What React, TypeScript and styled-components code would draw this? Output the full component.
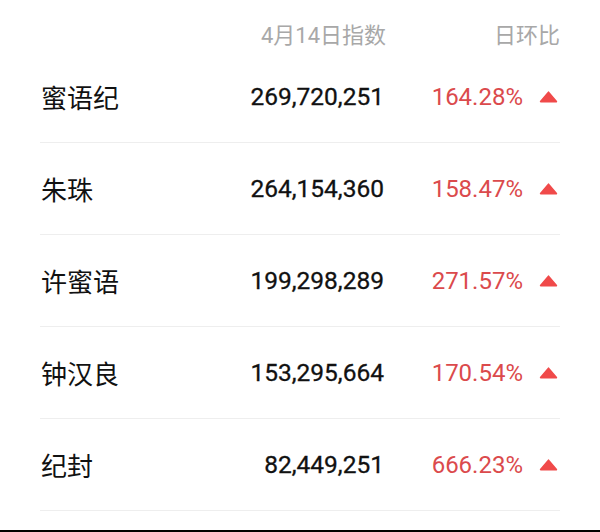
import React from "react";
import styled, { createGlobalStyle } from "styled-components";

const GlobalStyle = createGlobalStyle`
  html, body {
    margin: 0;
    padding: 0;
    background: #fff;
  }
  body {
    font-family: "Roboto", "Noto Sans CJK SC", sans-serif;
  }
`;

const Page = styled.div`
  width: 600px;
  height: 532px;
  box-sizing: border-box;
  border-bottom: 2px solid #000;
  padding: 0 40px;
  overflow: hidden;
`;

const Grid = styled.div`
  display: grid;
  grid-template-columns: 1fr auto 174px;
  align-items: center;
`;

const Header = styled(Grid)`
  height: 51px;
  padding-top: 15px;
  box-sizing: border-box;
  color: #a8a8a8;
  font-size: 22px;
`;

const HeadCell = styled.div<{ $right?: boolean }>`
  text-align: ${({ $right }) => ($right ? "right" : "left")};
  white-space: nowrap;
`;

const Row = styled(Grid)`
  height: 92px;
  box-sizing: border-box;
  border-bottom: 1px solid #eeeeee;
`;

const Name = styled.div`
  font-family: "Noto Sans CJK SC", sans-serif;
  font-size: 26px;
  color: #111;
  padding-left: 1px;
`;

const Value = styled.div`
  font-family: "Roboto", sans-serif;
  font-size: 24.5px;
  font-weight: 400;
  -webkit-text-stroke: 0.3px #111;
  color: #111;
  text-align: right;
  padding-right: 2px;
`;

const Change = styled.div`
  display: flex;
  align-items: center;
  justify-content: flex-end;
  gap: 16px;
  padding-right: 2px;
`;

const Pct = styled.span`
  font-family: "Roboto", sans-serif;
  font-size: 24px;
  color: #db4a4c;
`;

const Up = () => (
  <svg width="19" height="12" viewBox="0 0 19 12">
    <path
      d="M9.5 1.2 L17.4 10.6 L1.6 10.6 Z"
      fill="#f04a4a"
      stroke="#f04a4a"
      strokeWidth="1.6"
      strokeLinejoin="round"
    />
  </svg>
);

const rows = [
  { name: "蜜语纪", value: "269,720,251", pct: "164.28%" },
  { name: "朱珠", value: "264,154,360", pct: "158.47%" },
  { name: "许蜜语", value: "199,298,289", pct: "271.57%" },
  { name: "钟汉良", value: "153,295,664", pct: "170.54%" },
  { name: "纪封", value: "82,449,251", pct: "666.23%" },
];

export default function App() {
  return (
    <>
      <GlobalStyle />
      <Page>
        <Header>
          <HeadCell />
          <HeadCell $right>4月14日指数</HeadCell>
          <HeadCell $right>日环比</HeadCell>
        </Header>
        {rows.map((r) => (
          <Row key={r.name}>
            <Name>{r.name}</Name>
            <Value>{r.value}</Value>
            <Change>
              <Pct>{r.pct}</Pct>
              <Up />
            </Change>
          </Row>
        ))}
      </Page>
    </>
  );
}
